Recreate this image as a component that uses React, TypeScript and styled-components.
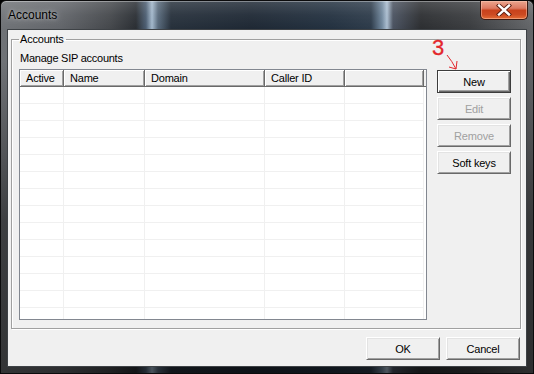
import React from "react";
import styled, { createGlobalStyle } from "styled-components";

const GlobalStyle = createGlobalStyle`
  html, body { margin: 0; padding: 0; background: #000; }
  body { width: 534px; height: 374px; overflow: hidden; font-family: "Liberation Sans", Arial, sans-serif; }
`;

const Window = styled.div`
  position: relative;
  width: 534px;
  height: 374px;
  box-sizing: border-box;
  display: flex;
  flex-direction: column;
  border: 1px solid #0b0b0c;
  border-radius: 6px 6px 0 0;
  overflow: hidden;
  background:
    linear-gradient(to bottom, rgba(255,255,255,0.16) 0px, rgba(255,255,255,0.05) 14px, rgba(0,0,0,0) 28px, rgba(0,0,0,0) 60px, rgba(0,0,0,0.45) 220px, rgba(0,0,0,0.55) 374px),
    linear-gradient(to right, #707377 0px, #62656a 60px, #44474b 110px, #2a2e33 135px, #4c5e72 145px, #a2b7cb 151px, #586a7c 157px, #26303b 170px, #1e2834 250px, #233140 330px, #2d3b4a 370px, #6f869c 381px, #aabdd0 386px, #4a5260 392px, #2c2e31 420px, #3b3d40 470px, #66686b 534px);
  box-shadow: inset 0 1px 0 rgba(255,255,255,0.35);
`;

const TitleBar = styled.div`
  height: 28px;
  flex: none;
  display: flex;
  align-items: flex-start;
  padding-left: 7px;
`;

const Title = styled.span`
  margin-top: 7px;
  font-size: 12px;
  line-height: 15px;
  color: #000;
  text-shadow: 0 0 6px rgba(255,255,255,0.55), 0 0 3px rgba(255,255,255,0.35);
`;

const CloseButton = styled.div`
  margin-left: auto;
  margin-right: 5px;
  width: 48px;
  height: 19px;
  box-sizing: border-box;
  border: 1px solid #3c1a12;
  border-top: none;
  border-radius: 0 0 5px 5px;
  background: linear-gradient(to bottom, #eba58e 0%, #dc7a62 40%, #c8421c 52%, #cc4a22 75%, #e46c36 100%);
  box-shadow: inset 0 0 0 1px rgba(255,210,190,0.45);
  display: flex;
  align-items: center;
  justify-content: center;
`;

const Client = styled.div`
  flex: 1;
  margin: 0 6px 6px 6px;
  border: 1px solid #3e4246;
  background: #f0f0f0;
  display: flex;
  flex-direction: column;
  padding: 3px 5px 0 3px;
`;

const GroupBox = styled.fieldset`
  margin: 0;
  padding: 6px 9px 8px 7px;
  border: 1px solid #a0a0a0;
  box-shadow: 1px 1px 0 #fff, inset 1px 1px 0 #fff;
  min-width: 0;
  display: flex;
  font-size: 11px;
`;

const Legend = styled.legend`
  padding: 0 2px 0 1px;
  font-size: 11px;
  line-height: 13px;
  letter-spacing: -0.2px;
  color: #000;
`;

const LeftColumn = styled.div`
  flex: 1;
  display: flex;
  flex-direction: column;
`;

const Label = styled.div`
  font-size: 11px;
  line-height: 13px;
  letter-spacing: -0.25px;
  padding-left: 1px;
  margin-bottom: 4px;
  color: #000;
`;

const ListView = styled.div`
  height: 251px;
  box-sizing: border-box;
  border: 1px solid #828790;
  background: #fff;
  overflow: hidden;
`;

const HeaderRow = styled.div`
  display: flex;
  height: 17px;
`;

const HeaderCell = styled.div<{ $w: number }>`
  width: ${(p) => p.$w}px;
  flex: none;
  box-sizing: border-box;
  height: 17px;
  padding-left: 6px;
  font-size: 11px;
  line-height: 16px;
  letter-spacing: -0.2px;
  background: #f0f0f0;
  border-right: 1px solid #696969;
  border-bottom: 1px solid #696969;
  box-shadow: inset 1px 1px 0 #fff, inset -1px -1px 0 #a0a0a0;
  color: #000;
  white-space: nowrap;
`;

const HeaderFill = styled.div`
  flex: 1;
  height: 17px;
  background: #f0f0f0;
  border-bottom: 1px solid #696969;
  box-sizing: border-box;
  box-shadow: inset 0 1px 0 #fff;
`;

const Row = styled.div`
  display: flex;
  height: 17px;
`;

const Cell = styled.div<{ $w: number }>`
  width: ${(p) => p.$w}px;
  flex: none;
  box-sizing: border-box;
  height: 17px;
  border-right: 1px solid #f0f0f0;
  border-bottom: 1px solid #f0f0f0;
`;

const ButtonColumn = styled.div`
  margin-left: 10px;
  margin-top: 18px;
  display: flex;
  flex-direction: column;
  gap: 4px;
`;

const Button = styled.button<{ $default?: boolean }>`
  width: 74px;
  height: 23px;
  box-sizing: border-box;
  margin: 0;
  padding: 0;
  font-family: "Liberation Sans", Arial, sans-serif;
  font-size: 11px;
  letter-spacing: -0.2px;
  color: ${(p) => (p.disabled ? "#a0a0a0" : "#000")};
  background: #f0f0f0;
  border-style: solid;
  border-width: 1px;
  border-color: ${(p) => (p.$default ? "#3c3c3c" : "#fff #696969 #696969 #fff")};
  box-shadow: ${(p) =>
    p.$default
      ? "inset 1px 1px 0 #fff, inset -1px -1px 0 #696969, inset -2px -2px 0 #a0a0a0"
      : "inset 1px 1px 0 #e3e3e3, inset -1px -1px 0 #a0a0a0"};
`;

const BottomBar = styled.div`
  display: flex;
  justify-content: flex-end;
  gap: 6px;
  margin-top: 8px;
  padding-right: 1px;
`;

const Annotation = styled.svg`
  position: absolute;
  left: 0;
  top: 0;
  pointer-events: none;
`;

const AnnotationNumber = styled.div`
  position: absolute;
  left: 431px;
  top: 36px;
  font-family: "Liberation Sans", Arial, sans-serif;
  font-size: 22px;
  line-height: 22px;
  color: #e3262c;
  -webkit-text-stroke: 0.3px #e3262c;
`;

const columns = [
  { name: "Active", w: 44 },
  { name: "Name", w: 81 },
  { name: "Domain", w: 120 },
  { name: "Caller ID", w: 80 },
  { name: "", w: 79 },
];

export default function App() {
  const rows = Array.from({ length: 14 });
  return (
    <>
      <GlobalStyle />
      <Window>
        <TitleBar>
          <Title>Accounts</Title>
          <CloseButton>
            <svg width="16" height="12" viewBox="0 0 16 12">
              <path d="M3 1.5 L13 10.5 M13 1.5 L3 10.5" stroke="#5a1d10" strokeWidth="4.2" strokeLinecap="square" />
              <path d="M3 1.5 L13 10.5 M13 1.5 L3 10.5" stroke="#ffffff" strokeWidth="2.4" strokeLinecap="square" />
            </svg>
          </CloseButton>
        </TitleBar>
        <Client>
          <GroupBox>
            <Legend>Accounts</Legend>
            <LeftColumn>
              <Label>Manage SIP accounts</Label>
              <ListView>
                <HeaderRow>
                  {columns.map((c, i) => (
                    <HeaderCell key={i} $w={c.w}>
                      {c.name}
                    </HeaderCell>
                  ))}
                  <HeaderFill />
                </HeaderRow>
                {rows.map((_, r) => (
                  <Row key={r}>
                    {columns.map((c, i) => (
                      <Cell key={i} $w={c.w} />
                    ))}
                  </Row>
                ))}
              </ListView>
            </LeftColumn>
            <ButtonColumn>
              <Button $default>New</Button>
              <Button disabled>Edit</Button>
              <Button disabled>Remove</Button>
              <Button>Soft keys</Button>
            </ButtonColumn>
          </GroupBox>
          <BottomBar>
            <Button>OK</Button>
            <Button>Cancel</Button>
          </BottomBar>
        </Client>
        <AnnotationNumber>3</AnnotationNumber>
        <Annotation width="534" height="374" viewBox="0 0 534 374">
          <path d="M446 54 Q451 60 455 68" fill="none" stroke="#e3262c" strokeWidth="1" />
          <path d="M455 68 L448 66 M455 68 L456 60" fill="none" stroke="#e3262c" strokeWidth="1" />
        </Annotation>
      </Window>
    </>
  );
}
